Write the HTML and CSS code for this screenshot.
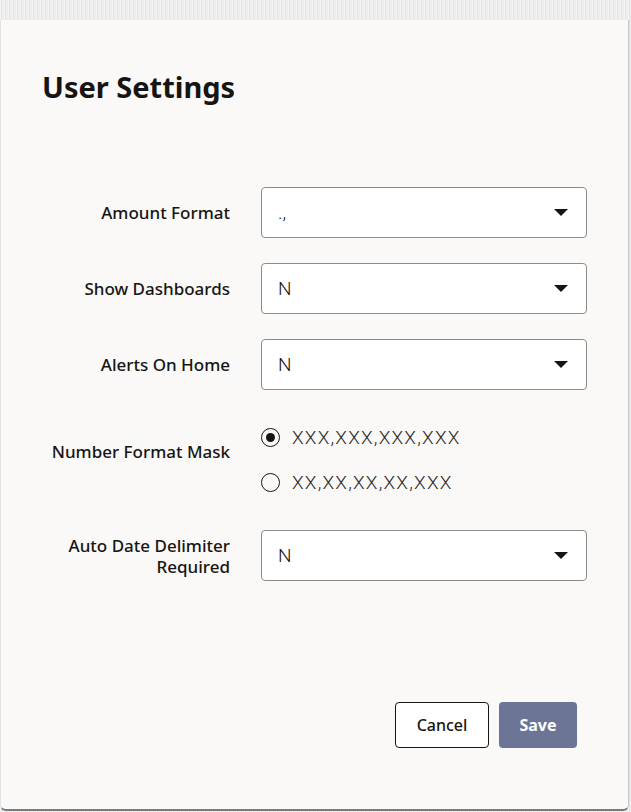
FILE: index.html
```html
<!DOCTYPE html>
<html lang="en">
<head>
<meta charset="utf-8">
<title>User Settings</title>
<link rel="stylesheet" href="styles.css">
</head>
<body>
<div class="dialog">
  <h1 class="title">User Settings</h1>
  <form class="form">
    <label class="label">Amount Format</label>
    <div class="select"><span class="value">.,</span><span class="caret"></span></div>

    <label class="label">Show Dashboards</label>
    <div class="select"><span class="value">N</span><span class="caret"></span></div>

    <label class="label">Alerts On Home</label>
    <div class="select"><span class="value">N</span><span class="caret"></span></div>

    <label class="label label-top">Number Format Mask</label>
    <div class="radios">
      <div class="radio-item"><span class="radio checked"></span><span class="radio-text">XXX,XXX,XXX,XXX</span></div>
      <div class="radio-item"><span class="radio"></span><span class="radio-text">XX,XX,XX,XX,XXX</span></div>
    </div>

    <label class="label">Auto Date Delimiter<br>Required</label>
    <div class="select"><span class="value">N</span><span class="caret"></span></div>
  </form>
  <div class="footer">
    <button type="button" class="btn btn-cancel">Cancel</button>
    <button type="button" class="btn btn-save">Save</button>
  </div>
</div>
</body>
</html>
```
FILE: styles.css
```css
html, body {
  margin: 0;
  padding: 0;
}
body {
  width: 631px;
  height: 812px;
  overflow: hidden;
  background-color: #e6e6e6;
  background-image: repeating-linear-gradient(90deg, #f4f4f4 0 1px, #e3e3e3 1px 2px, #ededed 2px 4px);
  font-family: "Noto Sans", "Open Sans", sans-serif;
  color: #161513;
}
.dialog {
  box-sizing: border-box;
  margin-top: 20px;
  width: 629px;
  height: 791px;
  background: #faf9f8;
  border-left: 1px solid #e2e2e2;
  border-right: 1px solid #c8c8c8;
  border-bottom: 2px solid #7a7a7a;
  border-radius: 0 0 6px 6px;
  display: flex;
  flex-direction: column;
  padding: 0 42px 0 0;
}
.title {
  margin: 49px 0 0 41px;
  font-size: 29px;
  font-weight: 700;
  line-height: 36px;
}
.form {
  margin-top: 82px;
  display: grid;
  grid-template-columns: 229px 326px;
  column-gap: 31px;
  row-gap: 25px;
  align-items: center;
}
.label {
  text-align: right;
  font-size: 17px;
  font-weight: 500;
  line-height: 21px;
}
.label-top {
  align-self: start;
  padding-top: 26px;
}
.select {
  box-sizing: border-box;
  height: 51px;
  background: #fff;
  border: 1px solid #8e8c89;
  border-radius: 4px;
  display: flex;
  align-items: center;
  justify-content: space-between;
  padding: 0 18px 0 16px;
}
.value {
  font-family: Roboto, "Noto Sans", sans-serif;
  font-weight: 300;
  font-size: 19px;
  color: #161513;
}
.caret {
  width: 0;
  height: 0;
  border-left: 7px solid transparent;
  border-right: 7px solid transparent;
  border-top: 7px solid #161513;
}
.radios {
  display: flex;
  flex-direction: column;
  padding: 0;
}
.radio-item {
  height: 45px;
  display: flex;
  align-items: center;
  gap: 12px;
}
.radio {
  box-sizing: border-box;
  width: 19px;
  height: 19px;
  border: 1.5px solid #161513;
  border-radius: 50%;
  display: flex;
  align-items: center;
  justify-content: center;
}
.radio.checked::after {
  content: "";
  width: 9px;
  height: 9px;
  border-radius: 50%;
  background: #161513;
}
.radio-text {
  font-family: Roboto, "Noto Sans", sans-serif;
  font-weight: 300;
  font-size: 19px;
  color: #2a2826;
  letter-spacing: 1.2px;
}
.footer {
  margin-top: auto;
  padding-bottom: 61px;
  display: flex;
  justify-content: flex-end;
  gap: 10px;
  padding-right: 9px;
}
.btn {
  box-sizing: border-box;
  height: 46px;
  border-radius: 4px;
  font-family: "Noto Sans", "Open Sans", sans-serif;
  font-size: 16px;
  cursor: pointer;
}
.btn-cancel {
  width: 94px;
  background: #fff;
  border: 1px solid #161513;
  color: #161513;
  font-weight: 500;
}
.btn-save {
  width: 78px;
  background: #6c7596;
  border: none;
  color: #fff;
  font-weight: 700;
}
```
